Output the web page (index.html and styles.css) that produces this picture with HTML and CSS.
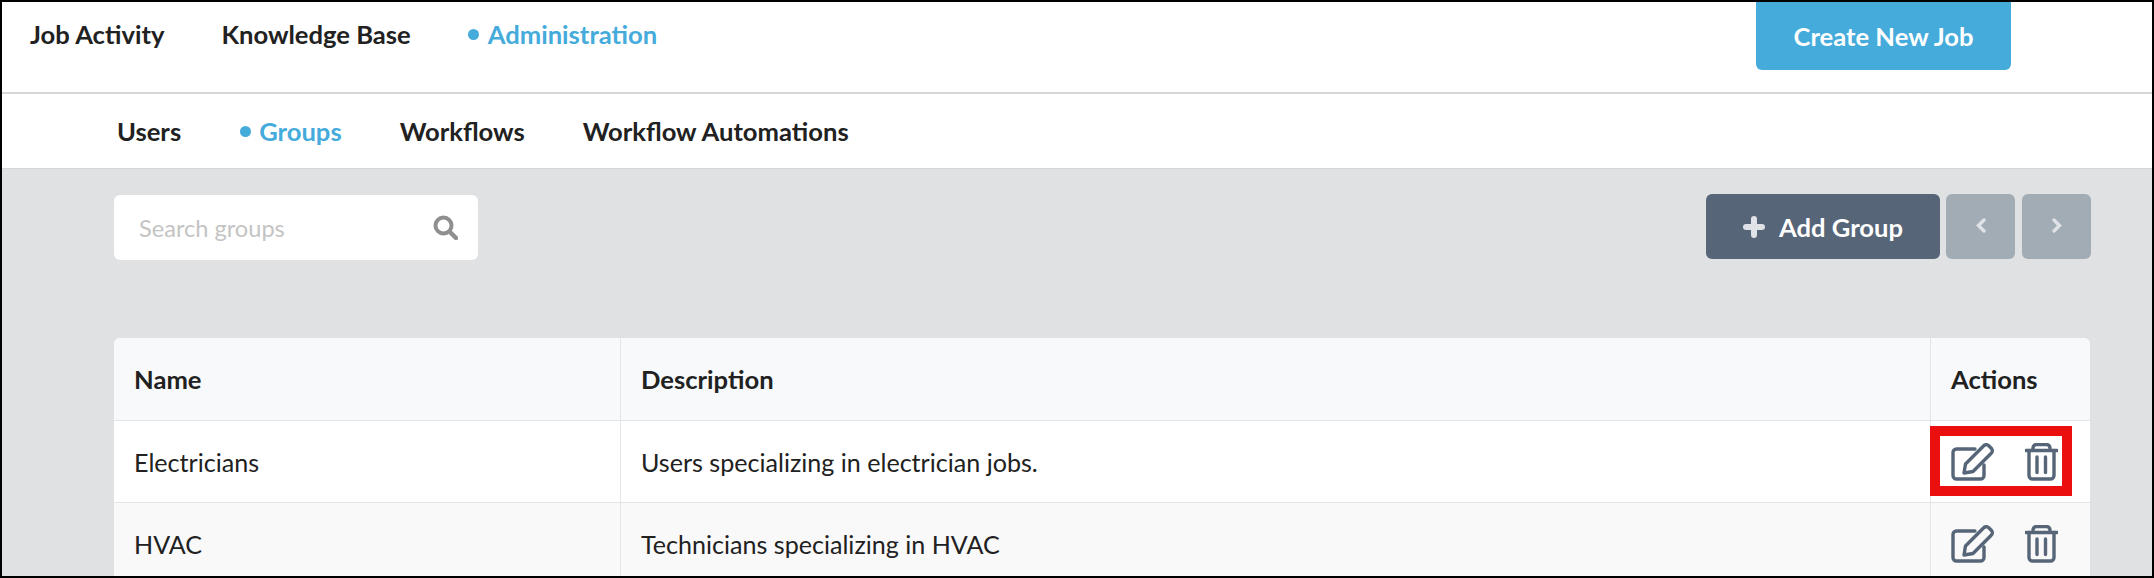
FILE: index.html
```html
<!DOCTYPE html>
<html lang="en">
<head>
    <meta charset="UTF-8">
    <meta name="viewport" content="width=device-width, initial-scale=1.0">
    <title>Groups</title>
    <link rel="stylesheet" href="styles.css">
</head>
<body>
    <div class="frame">
        <!-- Main nav -->
        <header class="topbar">
            <nav class="main-nav">
                <a href="#">Job Activity</a>
                <a href="#">Knowledge Base</a>
                <a href="#" class="active">Administration</a>
            </nav>
            <button class="create-job">Create New Job</button>
        </header>
        <!-- Admin nav -->
        <nav class="sub-nav">
            <a href="#">Users</a>
            <a href="#" class="active">Groups</a>
            <a href="#">Workflows</a>
            <a href="#">Workflow Automations</a>
        </nav>
        <main class="content">
            <div class="toolbar">
                <div class="search-box">
                    <span class="search-text">Search groups</span>
                    <svg class="search-icon" viewBox="0 0 25 25" width="25" height="25">
                        <circle cx="10.5" cy="10.5" r="8" fill="none" stroke="#8f8f8f" stroke-width="4"/>
                        <path d="M16.5 16.5L23 23" fill="none" stroke="#8f8f8f" stroke-width="4.5" stroke-linecap="round"/>
                    </svg>
                </div>
                <div class="toolbar-actions">
                    <button class="add-group">
                        <svg viewBox="0 0 22 22" width="22" height="22">
                            <path d="M11 3V19M3 11H19" fill="none" stroke="#dfe2e6" stroke-width="6" stroke-linecap="round"/>
                        </svg>
                        Add Group
                    </button>
                    <button class="page-btn">
                        <svg viewBox="0 0 10 15" width="10" height="15">
                            <path d="M8 2L2.5 7.5L8 13" fill="none" stroke="#dfe2e6" stroke-width="3.4" stroke-linecap="round"/>
                        </svg>
                    </button>
                    <button class="page-btn page-next">
                        <svg viewBox="0 0 10 15" width="10" height="15">
                            <path d="M2 2L7.5 7.5L2 13" fill="none" stroke="#dfe2e6" stroke-width="3.4" stroke-linecap="round"/>
                        </svg>
                    </button>
                </div>
            </div>
            <table class="groups-table">
                <thead>
                    <tr>
                        <th class="col-name">Name</th>
                        <th>Description</th>
                        <th class="col-actions">Actions</th>
                    </tr>
                </thead>
                <tbody>
                    <tr>
                        <td>Electricians</td>
                        <td>Users specializing in electrician jobs.</td>
                        <td class="actions-cell">
                            <div class="row-actions">
                                <svg class="icon-edit" viewBox="0 0 44 38" width="44" height="38">
                                    <path d="M24 6H5.5A3.5 3.5 0 0 0 2 9.500V32.500A3.500 3.500 0 0 0 5.500 36H29.500A3.500 3.500 0 0 0 33 32.500V22"/>
                                    <path d="M14.500 21L32.500 3A3.500 3.500 0 0 1 37.500 2.500L40.500 5.500A3.500 3.500 0 0 1 40 10.500L22 28.500L13 30Z"/>
                                </svg>
                                <svg class="icon-trash" viewBox="0 0 33 38" width="33" height="38">
                                    <path d="M1 7.500H32M8 7V5A3.500 3.500 0 0 1 11.500 1.500H21.500A3.500 3.500 0 0 1 25 5V7"/>
                                    <path d="M4 7.500V32.500A3.500 3.500 0 0 0 7.500 36H25.500A3.500 3.500 0 0 0 29 32.500V7.500"/>
                                    <path d="M12 14V29.500M20.500 14V29.500"/>
                                </svg>
                                <!-- annotation from the screenshot -->
                                <div class="highlight"></div>
                            </div>
                        </td>
                    </tr>
                    <tr>
                        <td>HVAC</td>
                        <td>Technicians specializing in HVAC</td>
                        <td class="actions-cell">
                            <div class="row-actions">
                                <svg class="icon-edit" viewBox="0 0 44 38" width="44" height="38">
                                    <path d="M24 6H5.5A3.5 3.5 0 0 0 2 9.500V32.500A3.500 3.500 0 0 0 5.500 36H29.500A3.500 3.500 0 0 0 33 32.500V22"/>
                                    <path d="M14.500 21L32.500 3A3.500 3.500 0 0 1 37.500 2.500L40.500 5.500A3.500 3.500 0 0 1 40 10.500L22 28.500L13 30Z"/>
                                </svg>
                                <svg class="icon-trash" viewBox="0 0 33 38" width="33" height="38">
                                    <path d="M1 7.500H32M8 7V5A3.500 3.500 0 0 1 11.500 1.500H21.500A3.500 3.500 0 0 1 25 5V7"/>
                                    <path d="M4 7.500V32.500A3.500 3.500 0 0 0 7.500 36H25.500A3.500 3.500 0 0 0 29 32.500V7.500"/>
                                    <path d="M12 14V29.500M20.500 14V29.500"/>
                                </svg>
                            </div>
                        </td>
                    </tr>
                </tbody>
            </table>
        </main>
    </div>
</body>
</html>
```
FILE: styles.css
```css
* {
    box-sizing: border-box;
}
html, body {
    margin: 0;
    height: 100%;
}
body {
    font-family: Lato, "Open Sans", sans-serif;
    color: #212121;
    background-color: #fff;
}
a {
    color: inherit;
    text-decoration: none;
}
button {
    font-family: inherit;
    border: none;
    cursor: pointer;
}
.frame {
    height: 578px;
    border: 2px solid #000;
    overflow: hidden;
    display: flex;
    flex-direction: column;
}
.topbar {
    flex: none;
    height: 92px;
    border-bottom: 2px solid #d5d6d8;
    display: flex;
    align-items: flex-start;
    justify-content: space-between;
    padding-left: 28px;
    padding-right: 141px;
}
.main-nav {
    display: flex;
    gap: 57px;
    height: 64px;
    align-items: center;
    font-size: 25.6px;
    font-weight: 700;
}
.sub-nav {
    flex: none;
    height: 75px;
    border-bottom: 1px solid #d5d6d8;
    display: flex;
    gap: 58px;
    align-items: center;
    padding-left: 115px;
    font-size: 25.6px;
    font-weight: 700;
}
.active {
    display: flex;
    align-items: center;
    gap: 8px;
    color: #44abdb;
}
.sub-nav .active {
    margin-left: 1px;
}
.main-nav .active {
    gap: 9px;
}
.active::before {
    content: "";
    width: 11px;
    height: 11px;
    border-radius: 50%;
    background-color: #44abdb;
}
.create-job {
    width: 255px;
    height: 68px;
    background-color: #44abdb;
    color: #fff;
    font-size: 25.6px;
    font-weight: 700;
    border-radius: 0 0 6px 6px;
}
.content {
    flex: 1;
    background-color: #e0e1e3;
    padding: 26px 61px 0 112px;
}
.toolbar {
    display: flex;
    justify-content: space-between;
    align-items: flex-start;
    height: 143px;
}
.search-box {
    width: 364px;
    height: 65px;
    background-color: #fff;
    border-radius: 6px;
    display: flex;
    align-items: center;
    justify-content: space-between;
    padding: 0 20px 0 25px;
    font-size: 23.6px;
}
.search-text {
    color: #c4c4c4;
}
.toolbar-actions {
    display: flex;
    gap: 6px;
    margin-top: -1px;
}
.add-group {
    width: 234px;
    height: 65px;
    background-color: #566577;
    color: #fff;
    font-size: 25.6px;
    font-weight: 700;
    border-radius: 6px;
    display: flex;
    align-items: center;
    justify-content: center;
    gap: 14px;
}
.page-btn {
    width: 69px;
    height: 65px;
    background-color: #a2acb5;
    border-radius: 6px;
    display: flex;
    align-items: center;
    justify-content: center;
    padding: 0 0 3px;
}
.page-next {
    margin-left: 1px;
}
.groups-table {
    width: 1976px;
    border-collapse: separate;
    border-spacing: 0;
    table-layout: fixed;
    background-color: #fff;
    font-size: 25.1px;
    border-radius: 6px 6px 0 0;
}
.groups-table th,
.groups-table td {
    height: 82px;
    padding: 0 20px;
    text-align: left;
    border-bottom: 1px solid #e3e5e8;
    border-right: 1px solid #e3e5e8;
}
.groups-table th {
    height: 83px;
    background-color: #f8f9fb;
    font-size: 25.6px;
    font-weight: 700;
}
.groups-table th:first-child {
    border-top-left-radius: 6px;
}
.groups-table th:last-child {
    border-top-right-radius: 6px;
}
.groups-table th:last-child,
.groups-table td:last-child {
    border-right: none;
}
.groups-table tbody tr:nth-child(even) {
    background-color: #f9f9f9;
}
.col-name {
    width: 507px;
}
.col-actions {
    width: 159px;
}
.row-actions {
    position: relative;
    display: flex;
    gap: 30px;
    align-items: center;
}
.row-actions svg {
    flex: none;
    fill: none;
    stroke: #566577;
    stroke-width: 3.4;
    stroke-linejoin: round;
    stroke-linecap: round;
}
.highlight {
    position: absolute;
    left: -21px;
    top: -17px;
    width: 142px;
    height: 70px;
    border: 10px solid #eb0f0f;
}
```
